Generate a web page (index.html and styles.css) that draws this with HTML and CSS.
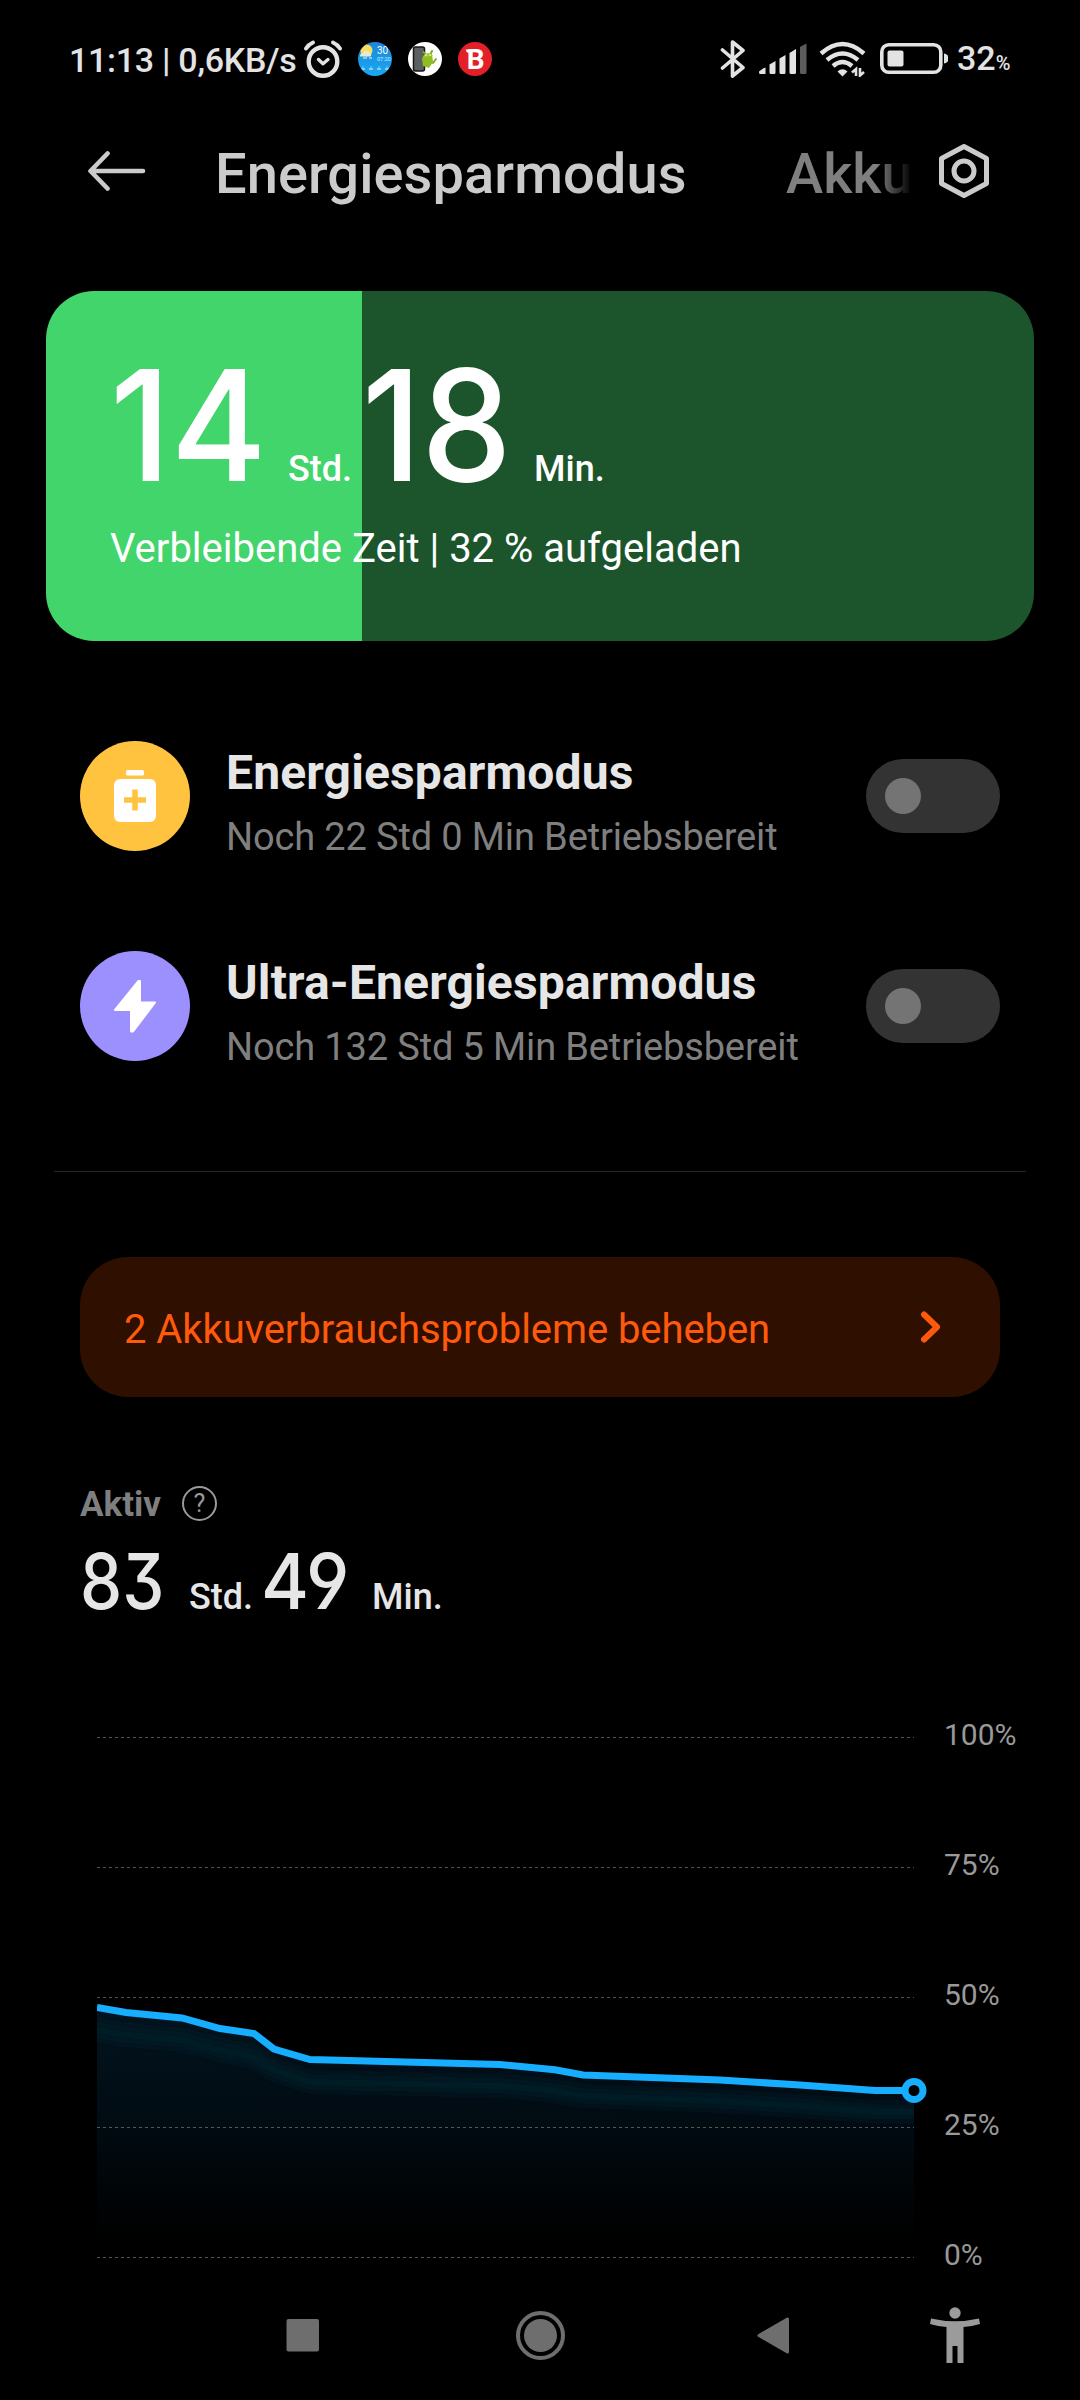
FILE: index.html
```html
<!DOCTYPE html>
<html lang="de">
<head>
<meta charset="utf-8">
<title>Energiesparmodus</title>
<link rel="stylesheet" href="styles.css">
</head>
<body>
<div class="status">
  <span class="status-text clock">11:13 | 0,6KB/s</span>
  <svg class="ic-alarm" width="40" height="40" viewBox="0 0 40 40" fill="none" stroke="#e3e3e3" stroke-linecap="round">
    <circle cx="20" cy="22.500" r="14.300" stroke-width="4.400"/>
    <path d="M3 9.500Q5.500 5.500 10 3.500M37 9.500Q34.500 5.500 30 3.500" stroke-width="4"/>
    <path d="M15.500 20.500l4.500 4.300 5-4.300" stroke-width="3.400" stroke-linejoin="round"/>
  </svg>
  <svg class="ic-app" width="34" height="34" viewBox="0 0 34 34">
    <defs><linearGradient id="sky" x1="0" y1="0" x2="0" y2="1"><stop offset="0" stop-color="#1b86dc"/><stop offset="1" stop-color="#18a9f2"/></linearGradient><clipPath id="disc"><circle cx="17" cy="17" r="17"/></clipPath></defs>
    <g clip-path="url(#disc)">
      <rect width="34" height="34" fill="url(#sky)"/>
      <circle cx="8.500" cy="8.500" r="6" fill="#f8dc5c"/>
      <path d="M2 14.500a3 3 0 0 1 3-3.500 4 4 0 0 1 7.500.500 2 2 0 0 1 0 3z" fill="#e4ecd0"/>
      <text x="19" y="11.500" class="wx-big">30</text>
      <text x="19" y="18.500" class="wx-small">07:20</text>
      <path d="M5 16h4M11 16h3M3 27h4M11 27h4M19 27h4M27 27h4" stroke="#a9dcf8" stroke-width="1.600"/>
      <path d="M5 24v2M13 24v2M21 24v2M29 24v2" stroke="#7fcdf8" stroke-width="1"/>
    </g>
  </svg>
  <svg class="ic-app" width="34" height="34" viewBox="0 0 34 34">
    <circle cx="17" cy="17" r="17" fill="#fff"/>
    <rect x="5.500" y="5" width="11" height="24" rx="2" fill="#5d6062" stroke="#151515" stroke-width="1.500"/>
    <path d="M14 17a7 7 0 0 1 10-5l1 8-4 6-6-2z" fill="#8fbe22"/>
    <path d="M15 15a5.500 5.500 0 0 1 10-1z" fill="#a4cb35"/>
    <path d="M17 12l-1.500-2M23 11l1-2M25 21l3-4" stroke="#84ab20" stroke-width="2" stroke-linecap="round"/>
    <circle cx="18" cy="13" r=".8" fill="#fff"/><circle cx="22" cy="13" r=".8" fill="#fff"/>
  </svg>
  <svg class="ic-app" width="34" height="34" viewBox="0 0 34 34">
    <circle cx="17" cy="17" r="17" fill="#e31f28"/>
    <text x="8.800" y="27.300" class="bd">B</text>
    <path d="M7.500 7.400h4v3h-2.500z" fill="#fff"/>
  </svg>
  <div class="status-right">
    <svg width="26" height="40" viewBox="0 0 26 40" fill="none" stroke="#e3e3e3" stroke-width="3.600" stroke-linejoin="round" stroke-linecap="round"><path d="M2.500 11L23 28.500 12.500 37V3L23 11.500 2.500 29"/></svg>
    <svg class="ic-signal" width="48" height="32" viewBox="0 0 48 32" fill="#e3e3e3">
      <path d="M0 28.500L4 25.500 6.500 24.500V31H1.500Q0 31 0 29.500zM10.500 21.500L16.500 18V29.500Q16.500 31 15 31H12Q10.500 31 10.500 29.500zM20.500 15.500L26.500 12V29.500Q26.500 31 25 31H22Q20.500 31 20.500 29.500zM30.500 10L37 6V29.500Q37 31 35.500 31H32Q30.500 31 30.500 29.500z"/>
      <path d="M41 4L47.500 .5V29.500Q47.500 31 46 31H42.500Q41 31 41 29.500z" fill="#5c5c5c"/>
    </svg>
    <svg class="ic-wifi" width="48" height="36" viewBox="0 0 48 36" fill="none" stroke="#e3e3e3">
      <path d="M2 12.500Q23.500-6.500 45 12.500" stroke-width="4.400"/>
      <path d="M8 19Q23.500 6 39 19" stroke-width="4.400"/>
      <path d="M14 25Q23.500 17 33 25" stroke-width="4.400"/>
      <path d="M18.500 30.500Q23.500 26 28.500 30.500L23.500 35.500z" fill="#e3e3e3" stroke="none"/>
      <path d="M37 35V28L33 31.500M41 27v7.500L45 31" stroke-width="2.600"/>
    </svg>
    <svg class="ic-batt" width="70" height="32" viewBox="0 0 70 32">
      <rect x="1.800" y="1.800" width="59" height="27.400" rx="7" fill="none" stroke="#e3e3e3" stroke-width="3.600"/>
      <rect x="7.500" y="7.500" width="16" height="16" rx="2" fill="#e3e3e3"/>
      <path d="M64 10.500q4 1 4 3v4q0 2-4 3z" fill="#e3e3e3"/>
    </svg>
    <span class="status-text">32<small>%</small></span>
  </div>
</div>

<header class="bar">
  <svg width="60" height="42" viewBox="0 0 60 42" fill="none" stroke="#cbcbcb" stroke-width="4.600" stroke-linecap="round" stroke-linejoin="round"><path d="M21.500 2.500L4.500 20 21.500 37.500M5 20H57"/></svg>
  <h1>Energiesparmodus</h1>
  <span class="tab">Akku</span>
  <svg class="gear" width="52" height="56" viewBox="0 0 52 56" fill="none" stroke="#cbcbcb" stroke-width="5" stroke-linejoin="round"><path d="M26 2.500L48.500 14.500V39.500L26 51.500 3.500 39.500V14.500z"/><circle cx="26" cy="27" r="10"/></svg>
</header>

<section class="card">
  <div class="time time-lg"><span class="num">14</span><span class="unit">Std.</span><span class="num num-second">18</span><span class="unit">Min.</span></div>
  <p>Verbleibende Zeit | 32 % aufgeladen</p>
</section>

<section class="modes">
  <div class="mode">
    <svg width="110" height="110" viewBox="0 0 110 110"><circle cx="55" cy="55" r="55" fill="#ffc340"/><rect x="46" y="29" width="18" height="5.500" rx="1.500" fill="#fff"/><rect x="34" y="38" width="42" height="43" rx="6" fill="#fff"/><path d="M55 48.500v21M44 59h22" stroke="#ffc340" stroke-width="5.500"/></svg>
    <div class="mode-text"><h2>Energiesparmodus</h2><p>Noch 22 Std 0 Min Betriebsbereit</p></div>
    <span class="switch"></span>
  </div>
  <div class="mode">
    <svg width="110" height="110" viewBox="0 0 110 110"><circle cx="55" cy="55" r="55" fill="#9c90ff"/><path d="M58.500 30L35 59H51V80.500L53 80.500 75 51.500H60V30z" fill="#fff" stroke="#fff" stroke-width="2" stroke-linejoin="round"/></svg>
    <div class="mode-text"><h2>Ultra-Energiesparmodus</h2><p>Noch 132 Std 5 Min Betriebsbereit</p></div>
    <span class="switch"></span>
  </div>
</section>

<hr>

<section class="alert">
  <span>2 Akkuverbrauchsprobleme beheben</span>
  <svg width="22" height="34" viewBox="0 0 22 34" fill="none" stroke="#ff5a0c" stroke-width="6" stroke-linecap="round" stroke-linejoin="round"><path d="M4 4.500L17 17 4 29.500"/></svg>
</section>

<section class="active">
  <div class="active-head"><span>Aktiv</span><i class="help">?</i></div>
  <div class="time time-sm"><span class="num">83</span><span class="unit">Std.</span><span class="num num-second">49</span><span class="unit">Min.</span></div>
</section>

<section class="chart">
  <svg width="847" height="556" viewBox="97 1717 847 556">
    <defs>
      <linearGradient id="fade" gradientUnits="userSpaceOnUse" x1="0" y1="2007" x2="0" y2="2240"><stop offset="0" stop-color="#021520"/><stop offset=".5" stop-color="#010b12"/><stop offset="1" stop-color="#000"/></linearGradient>
      <clipPath id="area"><path d="M97 2007.500L126 2012.500 182 2018 220 2028.500 254 2033.500 274 2049 310 2059.500 500 2064.500 555 2069.700 583 2075 720 2080 800 2085 875 2090.500H914V2257H97z"/></clipPath>
      <filter id="soft" x="-10%" y="-50%" width="120%" height="200%"><feGaussianBlur stdDeviation="5"/></filter>
    </defs>
    <g clip-path="url(#area)">
      <rect x="97" y="2000" width="817" height="257" fill="url(#fade)"/>
      <path d="M60 2024L126 2035 182 2040 220 2050 254 2057 274 2070 310 2082 505 2086 555 2091 583 2096 720 2101 800 2106 875 2112H950" fill="none" stroke="#041c28" stroke-width="15" filter="url(#soft)"/>
    </g>
    <path d="M97 1737.500H914M97 1867.500H914M97 1997.500H914M97 2127.500H914M97 2257.500H914" stroke="#fff" stroke-opacity=".32" stroke-width="1" stroke-dasharray="3 3"/>
    <path d="M97 2007.500L126 2012.500 182 2018 220 2028.500 254 2033.500 274 2049 310 2059.500 500 2064.500 555 2069.700 583 2075 720 2080 800 2085 875 2090.500H907" fill="none" stroke="#17aeff" stroke-width="7"/>
    <circle cx="914" cy="2090.500" r="9" fill="#000" stroke="#17aeff" stroke-width="7"/>
  </svg>
  <div class="labels"><span>100%</span><span>75%</span><span>50%</span><span>25%</span><span>0%</span></div>
</section>

<nav>
  <svg width="1080" height="80" viewBox="0 2295 1080 80" fill="#6e6e6e">
    <rect x="286.500" y="2319" width="32.500" height="32.500" rx="2"/>
    <circle cx="540.500" cy="2335.500" r="16.500"/><circle cx="540.500" cy="2335.500" r="22.500" fill="none" stroke="#6e6e6e" stroke-width="4"/>
    <path d="M759 2335.500L787.500 2319V2352z" stroke="#6e6e6e" stroke-width="3" stroke-linejoin="round"/>
    <g fill="#9b9b9b"><circle cx="955" cy="2313" r="5.700"/><path d="M931 2318.500Q955 2324 979 2318.500L980 2324Q972 2326.500 963.500 2327V2363H957.500V2346H952.500V2363H946.500V2327Q938 2326.500 930 2324z"/></g>
  </svg>
</nav>
</body>
</html>
```
FILE: styles.css
```css
* { box-sizing: border-box; margin: 0; padding: 0; }
body { width: 1080px; height: 2400px; background: #000; color: #e6e6e6; font-family: Roboto, sans-serif; overflow: hidden; display: flex; flex-direction: column; }
svg { display: block; flex: none; }
span, h1, h2, p { white-space: nowrap; }

.status { height: 118px; padding-left: 69px; display: flex; align-items: center; }
.status-text { font-size: 34px; font-weight: 500; line-height: 40px; padding-top: 2px; color: #e3e3e3; }
.status-text small { font-size: 20px; }
.clock { width: 227px; letter-spacing: -.28px; }
.ic-alarm { margin: 0 15px 0 7px; }
.ic-app { margin-right: 16px; }
.wx-big { font: 10px Roboto, sans-serif; fill: #fff; }
.wx-small { font: 5.500px Roboto, sans-serif; fill: #d5edfb; }
.bd { font: 700 28px Roboto, sans-serif; fill: #fff; }
.status-right { margin-left: auto; width: 390px; padding-left: 30px; display: flex; align-items: center; }
.ic-signal { margin-left: 13px; }
.ic-wifi { margin-left: 12px; }
.ic-batt { margin: 0 7px 0 13px; }

.bar { height: 108px; padding-left: 86px; display: flex; align-items: center; }
h1, .tab { font-size: 56px; font-weight: 500; line-height: 66px; padding-top: 4px; color: #cbcbcb; }
h1 { margin-left: 69px; width: 571px; letter-spacing: .07px; }
.tab { width: 126px; overflow: hidden; color: #7f7f7f; -webkit-mask-image: linear-gradient(90deg, #000 72%, transparent 100%); mask-image: linear-gradient(90deg, #000 72%, transparent 100%); }
.gear { margin-left: 26px; }

.card { margin: 65px 46px 0; height: 350px; border-radius: 48px; padding: 56px 64px 0; background: linear-gradient(90deg, #42d56b 316px, #1c552b 316px); color: #fff; }
.card p { font-size: 40px; line-height: 48px; margin-top: 22px; }
.time { display: flex; align-items: baseline; }
.num { font-family: Inter, sans-serif; font-feature-settings: "cv04", "cv09"; font-weight: 450; transform-origin: 0 50%; }
.unit { font-size: 36px; font-weight: 500; line-height: 40px; }
.time-lg { height: 156px; }
.time-lg .num { font-size: 154px; line-height: 156px; width: 178px; transform: scaleX(.95); }
.time-lg .num-second { width: 172px; margin-left: 10px; transform: scaleX(.93); }
.time-sm .num { font-size: 77px; line-height: 80px; width: 109px; transform: scaleX(.87); }
.time-sm .num-second { width: 111px; margin-left: 8px; transform: scaleX(.95); }

.modes { margin-top: 100px; padding: 0 80px; display: flex; flex-direction: column; gap: 100px; }
.mode { height: 110px; display: flex; align-items: center; }
.mode-text { margin-left: 36px; flex: 1; padding-top: 22px; }
h2 { font-size: 48px; font-weight: 700; line-height: 60px; color: #e6e6e6; letter-spacing: .15px; }
.mode p { font-size: 38px; line-height: 68px; color: #7f7f7f; letter-spacing: -.14px; }
.switch { width: 134px; height: 74px; border-radius: 37px; background: #333; padding: 19px; }
.switch::before { content: ""; display: block; width: 36px; height: 36px; border-radius: 50%; background: #747474; }

hr { border: 0; height: 1px; background: #262626; margin: 110px 54px 0; }

.alert { margin: 85px 80px 0; height: 140px; border-radius: 48px; background: #2e0f00; color: #ff5a0c; padding: 0 58px 0 44px; display: flex; align-items: center; justify-content: space-between; font-size: 40px; line-height: 48px; letter-spacing: -.07px; }
.alert span { padding-top: 6px; }

.active { padding: 86px 80px 0; height: 320px; }
.active-head { display: flex; align-items: center; height: 40px; font-size: 35px; font-weight: 700; color: #7f7f7f; line-height: 44px; }
.active-head span { padding-top: 4px; width: 82px; }
.help { width: 35px; height: 35px; border: 2px solid #999; border-radius: 50%; font: 400 25px/31px Roboto, sans-serif; text-align: center; color: #999; margin-left: 20px; }
.time-sm { height: 80px; margin-top: 18px; }

.chart { display: flex; padding-left: 97px; }
.labels { display: flex; flex-direction: column; gap: 94px; font-size: 30px; line-height: 36px; color: #999; }
nav { padding-top: 22px; }
```
